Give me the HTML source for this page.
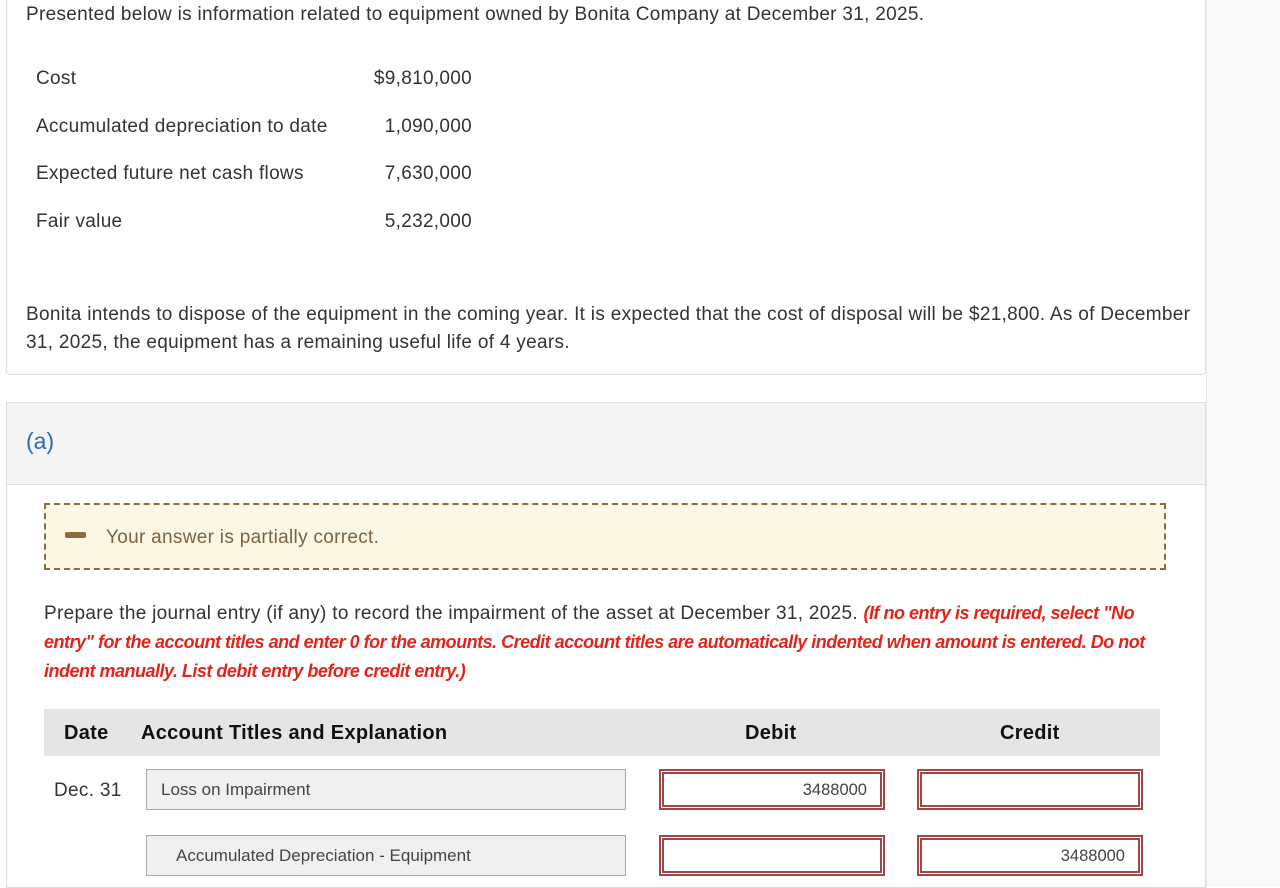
<!DOCTYPE html>
<html><head><style>
body{margin:0;width:1280px;height:887px;background:#fff;font-family:"Liberation Sans",sans-serif;color:#333;position:relative;overflow:hidden}
.abs{position:absolute;white-space:nowrap}
.right{position:absolute;left:1206px;top:0;width:74px;height:887px;background:#f9f9f9;border-left:1px solid #e8e8e8}
.p1{position:absolute;left:6px;top:-5px;width:1198px;height:378px;border:1px solid #ddd;border-radius:4px;background:#fff}
.p2{position:absolute;left:6px;top:402px;width:1198px;height:484px;border:1px solid #ddd;background:#fff}
.hdr{position:absolute;left:0;top:0;width:1198px;height:81px;background:#f4f4f4;border-bottom:1px solid #ddd}
.t{font-size:19px;letter-spacing:0.3px;color:#333}
.box{position:absolute;border:1px solid #aaa;background:#f0f0f0;font-size:17px;color:#444;box-sizing:border-box;padding-top:10px}
.red{position:absolute;border:2px solid #a04848;box-sizing:border-box;background:#fff;font-size:16.5px;color:#444;text-align:right;padding:10px 16px 0 0}
.red:after{content:"";position:absolute;left:1px;top:1px;right:1px;bottom:1px;border:2px solid #a04848}
.th{font-size:20px;letter-spacing:0.3px;font-weight:bold;color:#111}
</style></head><body>
<div class="right"></div>
<div class="p1"></div>
<div class="abs t" style="left:26px;top:4px">Presented below is information related to equipment owned by Bonita Company at December 31, 2025.</div>
<div class="abs t" style="left:36px;top:68px">Cost</div>
<div class="abs t" style="left:36px;top:116px">Accumulated depreciation to date</div>
<div class="abs t" style="left:36px;top:163px">Expected future net cash flows</div>
<div class="abs t" style="left:36px;top:211px">Fair value</div>
<div class="abs t" style="left:300px;width:172px;text-align:right;top:68px">$9,810,000</div>
<div class="abs t" style="left:300px;width:172px;text-align:right;top:116px">1,090,000</div>
<div class="abs t" style="left:300px;width:172px;text-align:right;top:163px">7,630,000</div>
<div class="abs t" style="left:300px;width:172px;text-align:right;top:211px">5,232,000</div>
<div class="abs t" style="left:26px;top:301px;line-height:28px;white-space:normal;width:1165px">Bonita intends to dispose of the equipment in the coming year. It is expected that the cost of disposal will be $21,800. As of December 31, 2025, the equipment has a remaining useful life of 4 years.</div>
<div class="p2"><div class="hdr"></div></div>
<div class="abs" style="left:26px;top:428px;font-size:23px;color:#2a6db5">(a)</div>
<div class="abs" style="left:44px;top:503px;width:1122px;height:67px;background:#fbf7e4;border:2px dashed #8a6d3b;box-sizing:border-box"></div>
<div class="abs" style="left:65px;top:532px;width:21px;height:6px;background:#8a6d3b;border-radius:2px"></div>
<div class="abs" style="left:106px;top:527px;font-size:19px;letter-spacing:0.3px;color:#7a6340">Your answer is partially correct.</div>
<div class="abs t" style="left:44px;top:599px;line-height:28px;white-space:normal;width:1125px">Prepare the journal entry (if any) to record the impairment of the asset at December 31, 2025. <i style="color:#e0261c;font-weight:bold;font-size:18px;letter-spacing:-0.5px">(If no entry is required, select "No entry" for the account titles and enter 0 for the amounts. Credit account titles are automatically indented when amount is entered. Do not indent manually. List debit entry before credit entry.)</i></div>
<div class="abs" style="left:44px;top:709px;width:1116px;height:47px;background:#e5e5e5"></div>
<div class="abs th" style="left:64px;top:722px">Date</div>
<div class="abs th" style="left:141px;top:722px">Account Titles and Explanation</div>
<div class="abs th" style="left:745px;top:722px">Debit</div>
<div class="abs th" style="left:1000px;top:722px">Credit</div>
<div class="abs t" style="left:54px;top:780px">Dec. 31</div>
<div class="box" style="left:146px;top:769px;width:480px;height:41px;padding-left:14px">Loss on Impairment</div>
<div class="box" style="left:146px;top:835px;width:480px;height:41px;padding-left:29px">Accumulated Depreciation - Equipment</div>
<div class="red" style="left:659px;top:769px;width:226px;height:41px">3488000</div>
<div class="red" style="left:917px;top:769px;width:226px;height:41px"></div>
<div class="red" style="left:659px;top:835px;width:226px;height:41px"></div>
<div class="red" style="left:917px;top:835px;width:226px;height:41px">3488000</div>
</body></html>
